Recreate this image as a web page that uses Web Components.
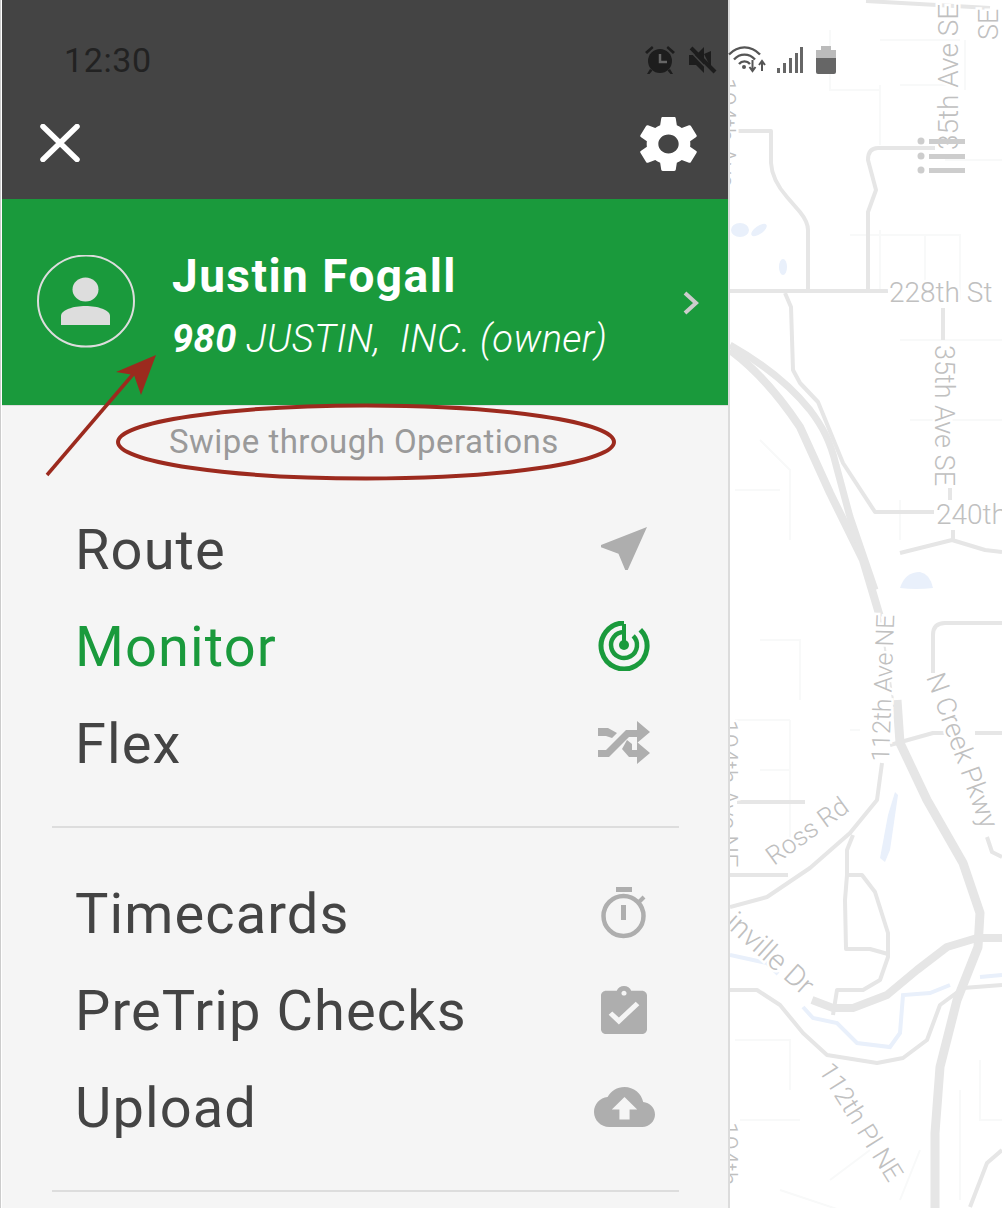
<!DOCTYPE html>
<html>
<head>
<meta charset="utf-8">
<title>Drawer</title>
<style>
    html, body { margin: 0; height: 100%; background: #fff; overflow: hidden; font-family: Roboto, "Liberation Sans", sans-serif; }
</style>
</head>
<body>
<app-page>
    <status-bar></status-bar>
    <nav-drawer>
        <drawer-header></drawer-header>
        <account-panel name="Justin Fogall" number="980" company="JUSTIN,  INC. (owner)"></account-panel>
        <swipe-hint>Swipe through Operations</swipe-hint>
        <menu-list>
            <menu-item>Route
                <svg slot="icon" width="46" height="43" viewBox="3 3 18 18" preserveAspectRatio="none" fill="#aeaeae"><path d="M21 3L3 10.53v.98l6.84 2.65L12.48 21h.98L21 3z"/></svg>
            </menu-item>
            <menu-item active>Monitor
                <svg slot="icon" width="54" height="50" viewBox="0 0 54 50" fill="none" stroke="#1a9a3c"><path d="M27 2A23 23 0 1 0 43.3 8.7" stroke-width="5"/><path d="M27 11A13 13 0 1 0 36.2 14.8" stroke-width="4.5"/><path d="M27 3V24" stroke-width="4"/><circle cx="27" cy="24" r="5" fill="#1a9a3c" stroke="none"/></svg>
            </menu-item>
            <menu-item>Flex
                <svg slot="icon" width="52" height="43" viewBox="0 0 52 43" fill="#aeaeae"><path d="M0 7H10L19 12L14 17L8 15H0z"/><path d="M0 29H8L28 9H39V0L52 11L39 22V16H31L11 36H0z"/><path d="M29 19L34 23V29H39V21L52 32L39 43V36H31L24 28z"/></svg>
            </menu-item>
        </menu-list>
        <menu-divider></menu-divider>
        <menu-list second>
            <menu-item>Timecards
                <svg slot="icon" width="48" height="52" viewBox="0 0 48 52" fill="none" stroke="#aeaeae"><path d="M16 2.500H32" stroke-width="5"/><circle cx="23.500" cy="29" r="20" stroke-width="4.500"/><path d="M23.500 18V33" stroke-width="5"/><path d="M38 16L44 10" stroke-width="4"/></svg>
            </menu-item>
            <menu-item>PreTrip Checks
                <svg slot="icon" width="46" height="48" viewBox="3 1 18 20" preserveAspectRatio="none" fill="#aeaeae"><path d="M19 3h-4.180C14.400 1.840 13.300 1 12 1c-1.300 0-2.400.840-2.820 2H5c-1.100 0-2 .900-2 2v14c0 1.100.900 2 2 2h14c1.100 0 2-.900 2-2V5c0-1.100-.900-2-2-2zm-7 0c.550 0 1 .450 1 1s-.450 1-1 1-1-.450-1-1 .450-1 1-1zm-2 14l-4-4 1.410-1.410L10 14.170l6.590-6.590L18 9l-8 8z"/></svg>
            </menu-item>
            <menu-item>Upload
                <svg slot="icon" width="61" height="40" viewBox="0 4 24 16" preserveAspectRatio="none" fill="#aeaeae"><path d="M19.350 10.040C18.670 6.590 15.640 4 12 4 9.110 4 6.600 5.640 5.350 8.040 2.340 8.360 0 10.910 0 14c0 3.310 2.690 6 6 6h13c2.760 0 5-2.240 5-5 0-2.640-2.050-4.780-4.650-4.960zM14 13v4h-4v-4H7l5-5 5 5h-3z"/></svg>
            </menu-item>
        </menu-list>
        <menu-divider></menu-divider>
    </nav-drawer>
    <map-canvas></map-canvas>
    <red-markup></red-markup>
</app-page>

<script>
class AppPage extends HTMLElement {
    constructor() {
        super();
        this.attachShadow({mode: "open"}).innerHTML = `
            <style>
                :host { display: flex; position: relative; width: 1002px; height: 1208px; overflow: hidden; padding-left: 2px; box-sizing: border-box; background: #fff; box-shadow: inset 1px 0 0 #ccc; }
            </style>
            <slot></slot>`;
    }
}

class StatusBar extends HTMLElement {
    constructor() {
        super();
        this.attachShadow({mode: "open"}).innerHTML = `
            <style>
                :host { display: block; position: absolute; z-index: 3; left: 64px; top: 45px; width: 772px; height: 30px; }
                .bar { display: flex; align-items: center; height: 100%; }
                .time { font: 400 34px Roboto, sans-serif; color: #222; letter-spacing: .6px; flex: 1; }
                svg { display: block; flex: none; }
            </style>
            <div class="bar">
                <span class="time">12:30</span>
                <svg width="32" height="30" viewBox="0 0 32 30" style="margin-right:12px"><g fill="#1d1d1d"><circle cx="16" cy="16" r="12"/><path d="M1 7L8 1l1.500 2L3 9zM31 7L24 1l-1.500 2L29 9z"/><path d="M6 24l-3 5h2.500l3-3.500zM26 24l3 5h-2.500l-3-3.500z"/></g><path d="M16 9V17H23" fill="none" stroke="#666" stroke-width="2.500"/></svg>
                <svg width="29" height="28" viewBox="0 0 29 28" style="margin-right:11px" fill="#1d1d1d"><path d="M1 9H8L16 1V27L8 19H1z"/><path d="M16 8L23 5V22z"/><path d="M3 2L27 26" stroke="#1d1d1d" stroke-width="4"/><path d="M0 3L24 28" stroke="#444" stroke-width="1.500"/></svg>
                <svg width="39" height="30" viewBox="0 0 39 30" style="margin-right:10px" fill="none" stroke="#555" stroke-width="2.400"><path d="M1 9.500C10 0 23 0 32 9.500"/><path d="M6 14.500C12 8 21 8 27 14.500"/><path d="M11 19C14 15.500 19 15.500 22 19"/><circle cx="16" cy="22" r="2" fill="#555" stroke="none"/><path d="M24.500 15V25M21.500 22L24.500 26L27.500 22M34 26V17M31 20L34 16L37 20" stroke-width="2"/></svg>
                <svg width="26" height="26" viewBox="0 0 26 26" style="margin-right:13px" fill="#666"><rect x="0" y="21" width="3" height="5"/><rect x="6" y="16" width="3" height="10"/><rect x="12" y="11" width="3" height="15"/><rect x="18" y="6" width="3" height="20" /><rect x="23" y="0" width="3" height="26"/></svg>
                <svg width="20" height="28" viewBox="0 0 20 28"><path d="M5 0H15V4H20V12H0V4H5z" fill="#bbb"/><path d="M0 12H20V26Q20 28 18 28H2Q0 28 0 26z" fill="#666"/></svg>
            </div>`;
    }
}

class NavDrawer extends HTMLElement {
    constructor() {
        super();
        this.attachShadow({mode: "open"}).innerHTML = `
            <style>
                :host { display: flex; flex-direction: column; flex: none; width: 726px; height: 1208px; background: #f5f5f5; border-right: 2px solid #dcdcdc; position: relative; z-index: 1; }
            </style>
            <slot></slot>`;
    }
}

class DrawerHeader extends HTMLElement {
    constructor() {
        super();
        this.attachShadow({mode: "open"}).innerHTML = `
            <style>
                :host { display: flex; flex: none; justify-content: space-between; align-items: flex-end; height: 199px; box-sizing: border-box; background: #444; padding: 0 31px 28px 38px; }
                svg { display: block; }
            </style>
            <svg width="40" height="38" viewBox="0 0 40 38" style="margin-bottom:9px" fill="none" stroke="#fff" stroke-width="5.500" stroke-linecap="round"><path d="M3 2.500L37 35.500M37 2.500L3 35.500"/></svg>
            <svg width="57" height="54" viewBox="2.200 2 19.600 20" preserveAspectRatio="none" fill="#fff"><path d="M19.430 12.980c.040-.320.070-.640.070-.980s-.030-.660-.070-.980l2.110-1.650c.190-.150.240-.420.120-.640l-2-3.460c-.120-.220-.390-.300-.610-.220l-2.490 1c-.520-.400-1.080-.730-1.690-.980l-.380-2.650C14.460 2.180 14.250 2 14 2h-4c-.250 0-.460.180-.490.420l-.380 2.650c-.610.250-1.170.590-1.690.980l-2.490-1c-.230-.090-.490 0-.610.220l-2 3.460c-.130.220-.070.490.120.640l2.110 1.650c-.040.320-.070.650-.070.980s.030.660.070.980l-2.110 1.650c-.190.150-.240.420-.120.640l2 3.460c.120.220.390.300.610.220l2.490-1c.520.400 1.080.730 1.690.980l.380 2.650c.030.240.240.420.490.420h4c.250 0 .460-.180.490-.420l.380-2.650c.610-.250 1.170-.590 1.690-.980l2.490 1c.230.090.490 0 .610-.220l2-3.460c.120-.220.070-.490-.120-.640l-2.110-1.650zM12 15.500c-1.930 0-3.500-1.570-3.500-3.500s1.570-3.500 3.500-3.500 3.500 1.570 3.500 3.500-1.570 3.500-3.500 3.500z"/></svg>`;
    }
}

class AccountPanel extends HTMLElement {
    constructor() {
        super();
        this.attachShadow({mode: "open"});
    }
    connectedCallback() {
        this.shadowRoot.innerHTML = `
            <style>
                :host { display: flex; flex: none; align-items: flex-start; height: 206px; box-sizing: border-box; background: #1a9a3c; padding: 56px 29px 0 34px; color: #fff; }
                .avatar { display: block; flex: none; margin-right: 36px; }
                .text { flex: 1; margin-top: -1px; }
                .name { font: 700 46px/44px Roboto, sans-serif; letter-spacing: 1.45px; }
                .company { font: italic 300 38px/44px Roboto, sans-serif; margin-top: 19px; white-space: pre; letter-spacing: .43px; }
                .company b { font-weight: 700; }
                .chev { display: block; margin-top: 36px; }
            </style>
            <svg class="avatar" width="100" height="94" viewBox="0 0 100 94"><ellipse cx="50" cy="46" rx="48" ry="45.500" fill="none" stroke="#ddd" stroke-width="2"/><ellipse cx="49.500" cy="34.500" rx="13" ry="12" fill="#ddd"/><path d="M25 70V61C25 55 37 51 49.500 51S74 55 74 61V70z" fill="#ddd"/></svg>
            <div class="text">
                <div class="name">${this.getAttribute('name')}</div>
                <div class="company"><b>${this.getAttribute('number')}</b> ${this.getAttribute('company')}</div>
            </div>
            <svg class="chev" width="16" height="24" viewBox="0 0 16 24" fill="none" stroke="#ccc" stroke-width="4"><path d="M2 2L13 12L2 22"/></svg>`;
    }
}

class SwipeHint extends HTMLElement {
    constructor() {
        super();
        this.attachShadow({mode: "open"}).innerHTML = `
            <style>
                :host { display: block; flex: none; height: 95px; box-sizing: border-box; border-top: 1px solid #ddd; padding: 14px 0 0 167px; font: 400 33px/44px Roboto, sans-serif; letter-spacing: .47px; color: #9a9a9a; }
            </style>
            <slot></slot>`;
    }
}

class MenuList extends HTMLElement {
    constructor() {
        super();
        this.attachShadow({mode: "open"}).innerHTML = `
            <style>
                :host { display: block; flex: none; padding-top: 0; }
                :host([second]) { padding-top: 36px; }
            </style>
            <slot></slot>`;
    }
}

class MenuItem extends HTMLElement {
    constructor() {
        super();
        this.attachShadow({mode: "open"}).innerHTML = `
            <style>
                :host { display: flex; align-items: center; height: 97px; padding-left: 73px; font: 400 56px/97px Roboto, sans-serif; letter-spacing: 1.1px; color: #444; }
                :host([active]) { color: #1a9a3c; }
                .label { flex: 1; padding-top: 3px; }
                .icon { display: flex; justify-content: center; align-items: center; width: 70px; margin-right: 69px; }
            </style>
            <span class="label"><slot></slot></span>
            <span class="icon"><slot name="icon"></slot></span>`;
    }
}

class MenuDivider extends HTMLElement {
    constructor() {
        super();
        this.attachShadow({mode: "open"}).innerHTML = `
            <style>
                :host { display: block; flex: none; height: 2px; margin: 35px 49px 0 50px; background: #ddd; }
            </style>`;
    }
}

class MapCanvas extends HTMLElement {
    constructor() {
        super();
        this.attachShadow({mode: "open"}).innerHTML = `
            <style>
                :host { display: block; flex: 1; height: 1208px; overflow: hidden; position: relative; }
                svg { display: block; position: absolute; right: 0; top: 0; }
                text { font-family: Roboto, sans-serif; font-weight: 300; fill: #c0c0c0; stroke: #fff; stroke-width: 5px; paint-order: stroke; }
                .street { fill: none; stroke: #f8f9f9; stroke-width: 2; }
                .road { fill: none; stroke: #e6e6e6; stroke-width: 4; stroke-linejoin: round; }
                .hw { fill: none; stroke: #e6e6e6; stroke-width: 9; stroke-linejoin: round; }
                .water { fill: #e9f0fb; }
                .creek { fill: none; stroke: #e9f0fb; stroke-width: 4; }
            </style>
            <svg width="272" height="1208" viewBox="730 0 272 1208">
                <path class="street" d="M830 30V90H880V130M900 85H960M880 85V145M850 235H960V300M760 440L790 470V540M735 490H780M760 640H800V700M735 720H790M880 230V290M925 235V290M900 340H1002M910 420H1002M900 540V500M735 1040H790V1090M830 1180L870 1150M740 1120H800M980 1060V1120H1002M850 730H860M790 720V840M760 770H790M960 1090V1200M920 1150L900 1200M780 1190L840 1210M965 40V90M880 40H960M945 160H1002"/>
                <path class="road" d="M866 1L990 8"/>
                <path class="road" d="M737 131H771V163Q772 180 787 197L800 212Q808 222 808 230V291"/>
                <path class="road" d="M935 148H878Q868 148 868 160L876 190L868 212V291"/>
                <path class="road" d="M730 291H888"/>
                <path class="road" d="M785 293L791 307L793 370L800 383L818 402L843 463L875 512H934"/>
                <path class="road" d="M943 308V340M950 488V500M953 530V540"/>
                <path class="road" d="M900 553L952 540L985 550L1002 552"/>
                <path class="road" d="M933 673V635Q933 623 945 623H1002"/>
                <path class="road" d="M890 745L933 733H950M975 733H1002"/>
                <path class="road" d="M987 837L992 852L1002 857"/>
                <path class="road" d="M730 907L767 897L810 868L850 833L877 800L882 763"/>
                <path class="road" d="M730 875H788"/>
                <path class="road" d="M737 802H805"/>
                <path class="road" d="M853 835L847 850V875L845 900L846 949H870L888 954"/>
                <path class="road" d="M847 875H862L875 892L888 933V957L880 980L863 990H837L833 1015"/>
                <path class="road" d="M730 990H757L780 1005L803 1033L827 1055L877 1063L903 1058L927 1040L940 1005L963 988L1002 985"/>
                <path class="road" d="M1002 1150L987 1163L970 1207"/>
                <path class="road" style="stroke-width:2" d="M880 617L893 700"/>
                <path class="hw" style="stroke-width:8" d="M730 350C760 372 782 400 800 427L830 493L863 560L880 617"/>
                <path class="hw" style="stroke-width:7" d="M730 345C760 362 790 385 810 410C822 426 830 440 836 465L850 517L875 590"/>
                <path class="hw" d="M897 700L900 743L927 800L963 863L980 913L978 947L957 1000L940 1067L935 1133V1208"/>
                <path class="hw" style="stroke-width:8" d="M1002 938H977L947 947L917 970L887 995L853 1008H833L812 1000"/>
                <ellipse class="water" cx="740" cy="230" rx="9" ry="7"/>
                <ellipse class="water" cx="759" cy="230" rx="9" ry="4" transform="rotate(-35 759 230)"/>
                <ellipse class="water" cx="783" cy="267" rx="4" ry="8"/>
                <path class="water" d="M900 588Q905 572 920 572Q930 574 933 588Q916 590 900 588z"/>
                <path class="water" d="M895 792L898 795L890 850L885 862L880 858L888 815z"/>
                <path class="creek" d="M730 955L767 963L778 974M803 1007L813 1018L837 1023L857 1043L890 1047L900 1033L903 995L930 993L950 985M980 977L1002 975"/>
                <text transform="translate(889 302)" font-size="28">228th St</text>
                <text transform="translate(935 345) rotate(90)" font-size="27">35th Ave SE</text>
                <text transform="translate(936 524)" font-size="28">240th</text>
                <text transform="translate(958 150) rotate(-90)" font-size="28">35th Ave SE</text>
                <text transform="translate(998 40) rotate(-90)" font-size="27">SE</text>
                <text transform="translate(889 762) rotate(-88)" font-size="25">112th Ave NE</text>
                <text transform="translate(926 677) rotate(70)" font-size="27">N Creek Pkwy</text>
                <text transform="translate(774 866) rotate(-36)" font-size="26">Ross Rd</text>
                <text transform="translate(724 925) rotate(42)" font-size="29">inville Dr</text>
                <text transform="translate(818 1070) rotate(58)" font-size="26">112th Pl NE</text>
                <text transform="translate(719 720) rotate(90)" font-size="25">104th Ave NE</text>
                <text transform="translate(719 1122) rotate(90)" font-size="25">104th</text>
                <text transform="translate(717 78) rotate(90)" font-size="25">104th Ave</text>
                <g fill="#cdcdcd"><circle cx="921" cy="141" r="3.500"/><circle cx="921" cy="156" r="3.500"/><circle cx="921" cy="170" r="3.500"/><rect x="929" y="139" width="36" height="5"/><rect x="929" y="154" width="36" height="5"/><rect x="929" y="168" width="36" height="5"/></g>
            </svg>`;
    }
}

class RedMarkup extends HTMLElement {
    constructor() {
        super();
        this.attachShadow({mode: "open"}).innerHTML = `
            <style>
                :host { display: block; position: absolute; z-index: 2; left: 0; top: 0; width: 730px; height: 500px; pointer-events: none; }
                svg { display: block; }
            </style>
            <svg width="730" height="500" viewBox="0 0 730 500" fill="none" stroke="#9c2a1e">
                <ellipse cx="366" cy="442" rx="248" ry="36.500" stroke-width="4"/>
                <path d="M47 475L135 372" stroke-width="3.500"/>
                <path d="M156 355L141 395L134 375L116 372z" fill="#9c2a1e" stroke="none"/>
            </svg>`;
    }
}

customElements.define('app-page', AppPage);
customElements.define('status-bar', StatusBar);
customElements.define('nav-drawer', NavDrawer);
customElements.define('drawer-header', DrawerHeader);
customElements.define('account-panel', AccountPanel);
customElements.define('swipe-hint', SwipeHint);
customElements.define('menu-list', MenuList);
customElements.define('menu-item', MenuItem);
customElements.define('menu-divider', MenuDivider);
customElements.define('map-canvas', MapCanvas);
customElements.define('red-markup', RedMarkup);
</script>
</body>
</html>
